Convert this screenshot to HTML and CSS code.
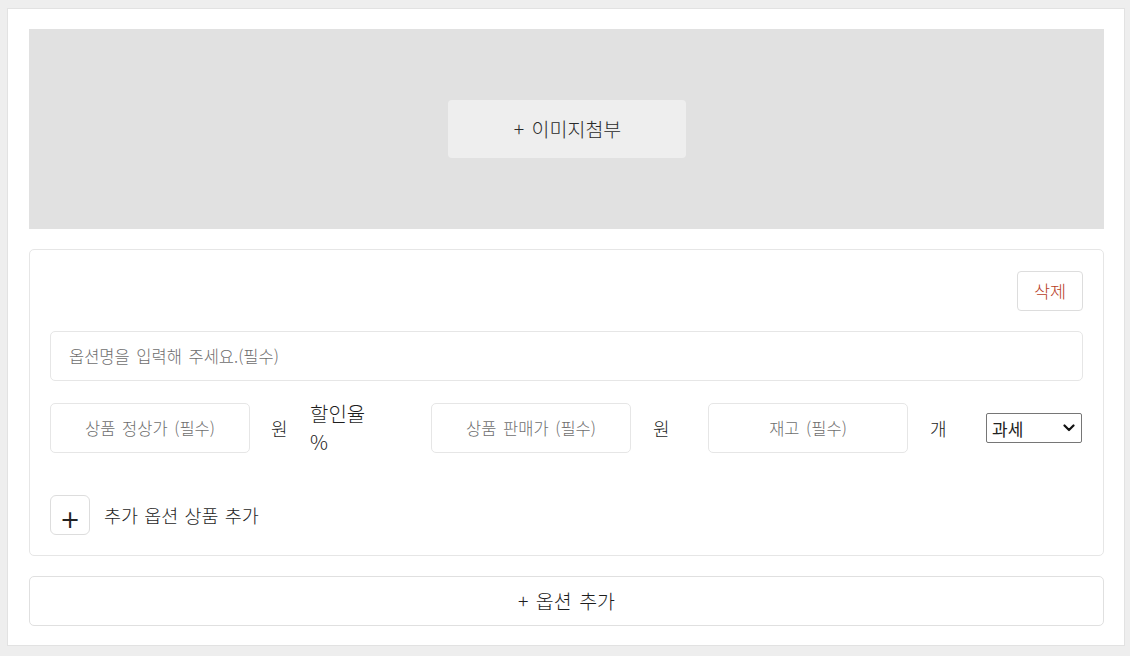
FILE: index.html
```html
<!DOCTYPE html>
<html lang="ko">
<head>
<meta charset="utf-8">
<title>상품 옵션 등록</title>
<link rel="stylesheet" href="styles.css">
</head>
<body>
<div class="page">
  <div class="panel">
    <div class="image-box">
      <button class="attach-btn" type="button">+ 이미지첨부</button>
    </div>

    <div class="option-card">
      <div class="card-top">
        <button class="delete-btn" type="button">삭제</button>
      </div>
      <input class="name-input" type="text" placeholder="옵션명을 입력해 주세요.(필수)">
      <div class="price-row">
        <input class="field" type="text" placeholder="상품 정상가 (필수)">
        <span class="unit unit-first">원</span>
        <span class="rate">할인율 %</span>
        <input class="field" type="text" placeholder="상품 판매가 (필수)">
        <span class="unit">원</span>
        <input class="field" type="text" placeholder="재고 (필수)">
        <span class="unit">개</span>
        <span class="select-wrap">
          <select class="tax-select">
            <option>과세</option>
            <option>면세</option>
          </select>
          <svg class="chevron" width="12" height="8" viewBox="0 0 12 8" aria-hidden="true">
            <path d="M1.5 1.5 L6 6 L10.5 1.5" fill="none" stroke="#111" stroke-width="2.2" stroke-linecap="round" stroke-linejoin="round"/>
          </svg>
        </span>
      </div>
      <div class="sub-row">
        <button class="plus-btn" type="button">+</button>
        <span class="sub-label">추가 옵션 상품 추가</span>
      </div>
    </div>

    <button class="add-option-btn" type="button">+ 옵션 추가</button>
  </div>
</div>
</body>
</html>
```

FILE: styles.css
```css
* {
  box-sizing: border-box;
}

html, body {
  margin: 0;
  padding: 0;
  background: #eeeeee;
  font-family: "Noto Sans CJK KR", "Noto Sans", sans-serif;
  font-weight: 400;
  color: #333333;
}

.page {
  padding: 8px 0 0 7px;
}

.panel {
  width: 1118px;
  background: #ffffff;
  border: 1px solid #e2e2e2;
  padding: 20px 20px 19px 21px;
  display: flex;
  flex-direction: column;
}

.image-box {
  height: 200px;
  background: #e1e1e1;
  display: flex;
  align-items: center;
  justify-content: center;
}

.attach-btn {
  width: 238px;
  height: 58px;
  margin-left: 1px;
  background: #eeeeee;
  border: none;
  border-radius: 4px;
  font-family: inherit;
  font-weight: 300;
  font-size: 19.5px;
  word-spacing: 2px;
  line-height: 24px;
  color: #2a2a2a;
  padding: 0 0 0 1px;
}

.option-card {
  margin-top: 20px;
  border: 1px solid #e6e6e6;
  border-radius: 5px;
  padding: 21px 20px 20px 20px;
  display: flex;
  flex-direction: column;
}

.card-top {
  display: flex;
  justify-content: flex-end;
}

.delete-btn {
  width: 66px;
  height: 40px;
  background: #ffffff;
  border: 1px solid #dddddd;
  border-radius: 4px;
  font-family: inherit;
  font-weight: 300;
  font-size: 17.5px;
  line-height: 22px;
  color: #b8401f;
  padding: 0;
}

.name-input {
  margin-top: 20px;
  height: 50px;
  width: 100%;
  border: 1px solid #e6e6e6;
  border-radius: 5px;
  padding: 0 0 0 18px;
  font-family: inherit;
  font-weight: 300;
  font-size: 16.5px;
  word-spacing: 2px;
  color: #333333;
  outline: none;
}

.price-row {
  margin-top: 22px;
  display: grid;
  grid-template-columns: 200px 60px 121px 200px 77px 200px 78px 96px;
  grid-template-rows: 50px;
  align-items: center;
}

.field {
  height: 50px;
  width: 200px;
  border: 1px solid #e6e6e6;
  border-radius: 5px;
  padding: 0 4px;
  text-align: center;
  font-family: inherit;
  font-weight: 300;
  font-size: 16.5px;
  word-spacing: 2px;
  color: #333333;
  outline: none;
}

input::placeholder {
  color: #6e6e6e;
}

.unit {
  font-size: 18px;
  font-weight: 300;
  line-height: 24px;
  padding-left: 22px;
  color: #1e1e1e;
}

.unit-first {
  padding-left: 21px;
}

.rate {
  width: 64px;
  font-size: 20px;
  font-weight: 300;
  line-height: 28px;
  color: #1e1e1e;
}

.select-wrap {
  display: grid;
  width: 96px;
  height: 30px;
}

.tax-select {
  grid-area: 1 / 1;
  width: 96px;
  height: 30px;
  appearance: none;
  -webkit-appearance: none;
  font-family: inherit;
  font-weight: 400;
  font-size: 17px;
  color: #222222;
  border: 1px solid #767676;
  border-radius: 2px;
  background: #ffffff;
  padding: 0 0 0 5px;
  outline: none;
}

.chevron {
  grid-area: 1 / 1;
  justify-self: end;
  align-self: center;
  margin-right: 7px;
  pointer-events: none;
}

.sub-row {
  margin-top: 42px;
  display: flex;
  align-items: center;
  gap: 14px;
}

.plus-btn {
  width: 40px;
  height: 40px;
  background: #ffffff;
  border: 1px solid #dddddd;
  border-radius: 6px;
  font-family: "DejaVu Sans", sans-serif;
  font-size: 24px;
  line-height: 24px;
  color: #222222;
  padding: 10px 0 0 0;
}

.sub-label {
  font-size: 18.5px;
  font-weight: 300;
  word-spacing: 1px;
  line-height: 24px;
  color: #1e1e1e;
}

.add-option-btn {
  margin-top: 20px;
  height: 50px;
  width: 100%;
  background: #ffffff;
  border: 1px solid #e0e0e0;
  border-radius: 5px;
  font-family: inherit;
  font-weight: 300;
  font-size: 19.5px;
  word-spacing: 2px;
  line-height: 24px;
  color: #1e1e1e;
  padding: 0;
}
```
